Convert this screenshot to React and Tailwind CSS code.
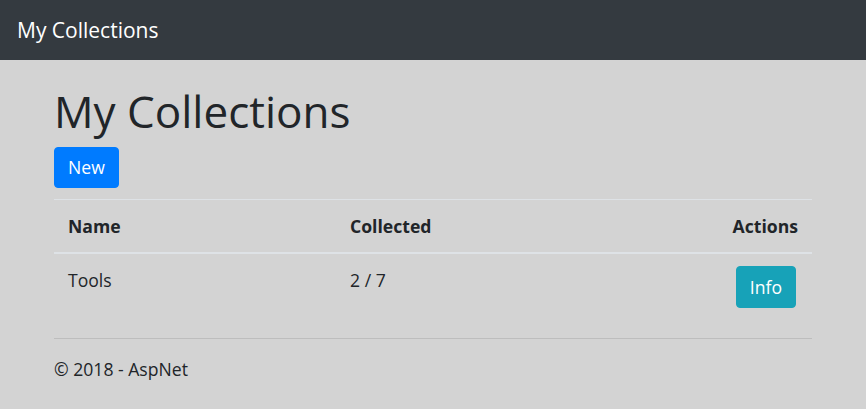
import React from 'react';

const collections = [{ id: 1, name: 'Tools', collected: 2, total: 7 }];

const App = () => {
  return (
    <div className="min-h-[409px] bg-[#d3d3d3] text-[#212529] text-[17.6px] leading-[26.4px]" style={{ fontFamily: '"Open Sans", "Noto Sans", sans-serif' }}>
      <nav className="h-[60px] bg-[#343a40] flex items-center px-[17px]">
        <a href="#" className="text-white text-[21px] leading-[32px]">My Collections</a>
      </nav>

      <main className="mx-[54px] pt-[25px]">
        <h1 className="text-[44px] leading-[52.8px] font-medium mb-[8.8px]">My Collections</h1>
        <button className="h-[41px] px-[13px] rounded-[4px] bg-[#007bff] text-white border border-[#007bff]">New</button>

        <table className="w-full mt-[11px]">
          <thead>
            <tr className="border-t border-b-2 border-[#dee2e6]">
              <th className="w-[282px] text-left font-bold px-[14px] py-[13px]">Name</th>
              <th className="text-left font-bold px-[14px] py-[13px]">Collected</th>
              <th className="text-right font-bold px-[14px] py-[13px]">Actions</th>
            </tr>
          </thead>
          <tbody>
            {collections.map(c => (
              <tr key={c.id}>
                <td className="align-top px-[14px] py-[13px]">{c.name}</td>
                <td className="align-top px-[14px] py-[13px]">{c.collected} / {c.total}</td>
                <td className="align-top text-right px-[14px] pt-[12px] pb-[14px]">
                  <button className="h-[42px] mr-[2px] px-[13px] rounded-[4px] bg-[#17a2b8] border border-[#17a2b8] text-white">Info</button>
                </td>
              </tr>
            ))}
          </tbody>
        </table>

        <hr className="mt-[16px] border-t border-black/10" />
        <footer className="py-[17px]">
          <p>© 2018 - AspNet</p>
        </footer>
      </main>
    </div>
  );
};

export default App;
